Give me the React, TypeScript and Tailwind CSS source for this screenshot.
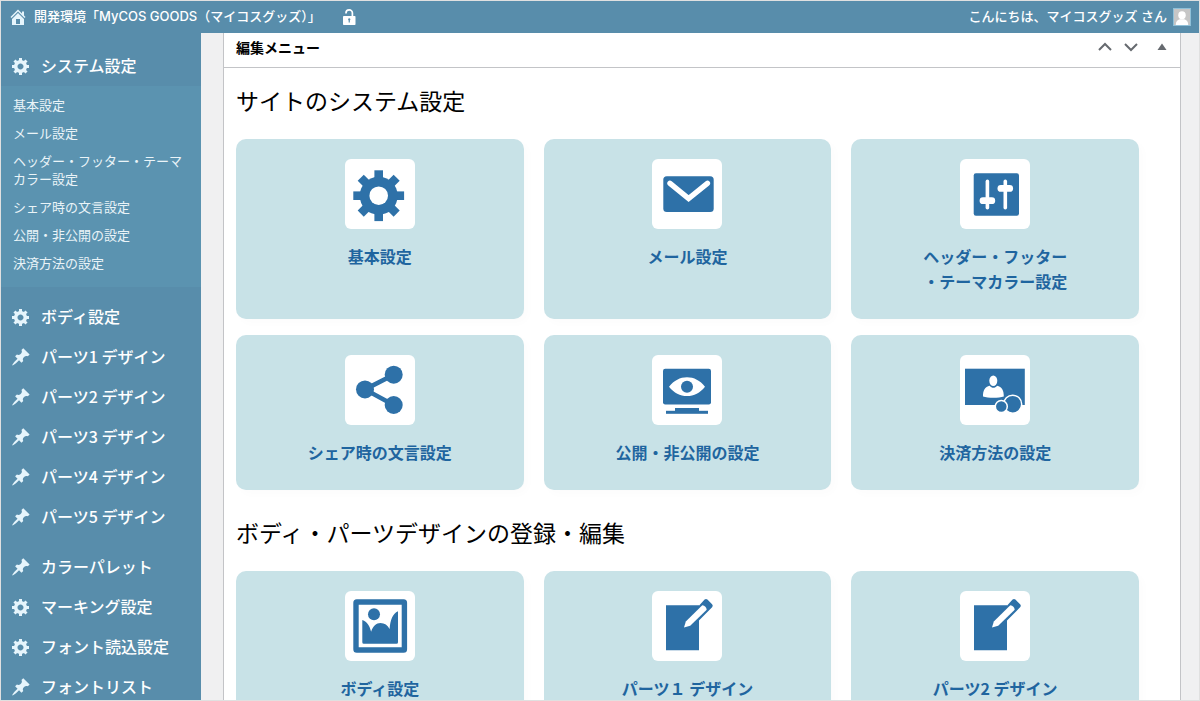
import type { ReactNode } from "react";

type MenuItem = { label: string; icon: "gear" | "pin" };
type CardItem = { label: ReactNode; icon: ReactNode };

const PATHS = {
  gear: "M18 12h-2.18c-.17.7-.44 1.35-.81 1.93l1.54 1.54-2.1 2.1-1.54-1.54c-.58.36-1.23.63-1.91.79V19H8v-2.18c-.68-.16-1.33-.43-1.91-.79l-1.54 1.54-2.12-2.12 1.54-1.54c-.36-.58-.63-1.23-.79-1.91H1V9.03h2.17c.16-.7.44-1.35.8-1.94L2.43 5.55l2.1-2.1 1.54 1.54c.58-.37 1.24-.64 1.93-.81V2h3v2.18c.68.16 1.33.43 1.91.79l1.54-1.54 2.12 2.12-1.54 1.54c.36.59.64 1.24.8 1.94H18V12zm-8.5 1.5c1.66 0 3-1.34 3-3s-1.34-3-3-3-3 1.34-3 3 1.34 3 3 3z",
  pin: "M10.44 3.02l1.82-1.82 6.36 6.35-1.83 1.82c-1.05-.68-2.48-.57-3.41.36l-.75.75c-.92.93-1.04 2.35-.35 3.41l-1.83 1.82-2.41-2.41-2.8 2.79c-.42.42-3.38 2.71-3.8 2.29s1.86-3.39 2.28-3.81l2.79-2.79L4.1 9.36l1.83-1.82c1.05.69 2.48.57 3.4-.36l.75-.75c.93-.92 1.05-2.35.36-3.41z",
  home: "M16 8.5l1.53 1.53-1.06 1.06L10 4.6l-6.47 6.49-1.06-1.06L10 2.5l4 4v-2h2v4zm-6-2.46l6 5.99V18H4v-5.97zM12 17v-5H8v5h4z",
};

const subMenu = [
  "基本設定",
  "メール設定",
  "ヘッダー・フッター・テーマカラー設定",
  "シェア時の文言設定",
  "公開・非公開の設定",
  "決済方法の設定",
];

const designMenu: MenuItem[] = [
  { label: "ボディ設定", icon: "gear" },
  { label: "パーツ1 デザイン", icon: "pin" },
  { label: "パーツ2 デザイン", icon: "pin" },
  { label: "パーツ3 デザイン", icon: "pin" },
  { label: "パーツ4 デザイン", icon: "pin" },
  { label: "パーツ5 デザイン", icon: "pin" },
];

const assetMenu: MenuItem[] = [
  { label: "カラーパレット", icon: "pin" },
  { label: "マーキング設定", icon: "gear" },
  { label: "フォント読込設定", icon: "gear" },
  { label: "フォントリスト", icon: "pin" },
];

const gearIcon = (
  <g>
    {[0, 45, 90, 135].map((deg) => (
      <rect key={deg} x="29.4" y="11.3" width="8.6" height="50.8" transform={`rotate(${deg} 33.7 36.7)`} />
    ))}
    <circle cx="33.7" cy="36.7" r="19" />
    <circle cx="33.7" cy="36.7" r="9.3" fill="#fff" />
  </g>
);

const mailIcon = (
  <g>
    <rect x="11.3" y="17.3" width="50.4" height="35.7" rx="3.5" />
    <path d="M18 24.3 36.6 39.5 55.4 24.3" fill="none" stroke="#fff" strokeWidth="5.4" strokeLinecap="round" />
  </g>
);

const slidersIcon = (
  <g>
    <rect x="13.7" y="14.3" width="45.3" height="42.4" rx="2.2" />
    <g fill="#fff">
      <rect x="25.6" y="20.6" width="3.6" height="30" rx="1.8" />
      <rect x="19.6" y="38.3" width="15.6" height="6.8" rx="3.4" />
      <rect x="43.5" y="20.6" width="3.6" height="30" rx="1.8" />
      <rect x="37.5" y="26" width="15.6" height="6.8" rx="3.4" />
    </g>
  </g>
);

const shareIcon = (
  <g>
    <path d="M48.7 19.7 20 34.4 48.7 50" fill="none" stroke="#2e71a8" strokeWidth="4.6" />
    <circle cx="20" cy="34.4" r="9" />
    <circle cx="48.7" cy="19.7" r="9" />
    <circle cx="48.7" cy="50" r="9" />
  </g>
);

const monitorIcon = (
  <g>
    <rect x="11" y="13.7" width="48" height="35.8" rx="2.2" />
    <rect x="23" y="53" width="24" height="3.5" />
    <rect x="14" y="55.8" width="42" height="3" />
    <path d="M17 31.7C22 25.5 28 22.3 35 22.3s13 3.2 18 9.4c-5 6.2-11 9.4-18 9.4s-13-3.2-18-9.4z" fill="#fff" />
    <circle cx="35" cy="31.7" r="6" />
  </g>
);

const paymentIcon = (
  <g>
    <rect x="5" y="13.7" width="59.8" height="36.3" />
    <ellipse cx="33.3" cy="25.7" rx="4" ry="5.3" fill="#fff" />
    <path d="M23 41.5c0-6.4 1.8-9.5 6.8-10.8 2 2.8 5.2 2.8 7.2 0 5 1.3 6.8 4.4 6.8 10.8-5 1.8-15.8 1.8-20.8 0z" fill="#fff" />
    <circle cx="52.7" cy="49.2" r="9" stroke="#fff" strokeWidth="1.5" />
    <circle cx="41.3" cy="51.5" r="6" stroke="#fff" strokeWidth="1.5" />
  </g>
);

const pictureIcon = (
  <g>
    <rect x="11" y="11" width="48.4" height="48" rx="0.8" fill="none" stroke="#2e71a8" strokeWidth="5.4" strokeLinejoin="round" />
    <circle cx="29" cy="23.2" r="6" />
    <path d="M17.3 29c5 2 7.5 6 8.8 11.7 1.8-5.5 5.2-8.7 9.4-8.7 4 0 7.2 2.2 9.1 6 .6-9 3.2-15.5 8.4-17.7v31a1.5 1.5 0 0 1-1.5 1.5H18.8a1.5 1.5 0 0 1-1.5-1.5z" />
  </g>
);

const editIcon = (
  <g>
    <path d="M14 14.3h33v45H14z" />
    <path d="M52.6 8.6q1.4-1.2 2.8 0l4.7 4.7q1.4 1.4 0 3L44 32.5 34 29z" />
    <path d="M32 36.4 33.8 30.5 50.3 14.2q4 .6 4.4 4.6L38.2 34.7z" fill="#fff" />
  </g>
);

const systemCards: CardItem[] = [
  { label: "基本設定", icon: gearIcon },
  { label: "メール設定", icon: mailIcon },
  {
    label: (
      <>
        ヘッダー・フッター
        <br />
        ・テーマカラー設定
      </>
    ),
    icon: slidersIcon,
  },
  { label: "シェア時の文言設定", icon: shareIcon },
  { label: "公開・非公開の設定", icon: monitorIcon },
  { label: "決済方法の設定", icon: paymentIcon },
];

const designCards: CardItem[] = [
  { label: "ボディ設定", icon: pictureIcon },
  { label: "パーツ１ デザイン", icon: editIcon },
  { label: "パーツ2 デザイン", icon: editIcon },
];

function DashIcon({ name }: { name: keyof typeof PATHS }) {
  return (
    <svg viewBox="0 0 20 20" className="size-5 shrink-0 fill-[#e6f5fc]" aria-hidden="true">
      <path d={PATHS[name]} />
    </svg>
  );
}

function SideLink({ label, icon }: MenuItem) {
  return (
    <li>
      <a href="#" className="flex h-10 items-center gap-2.5 pl-2.5 text-base font-medium text-white">
        <DashIcon name={icon} />
        <span className="pb-0.5">{label}</span>
      </a>
    </li>
  );
}

function CardGrid({ items }: { items: CardItem[] }) {
  return (
    <div className="grid grid-cols-3 gap-x-5 gap-y-4">
      {items.map((item, i) => (
        <a
          key={i}
          href="#"
          className="flex flex-col items-center rounded-[10px] bg-[#c8e2e7] pt-5 pb-[25px] shadow-[4px_4px_10px_rgba(0,0,0,0.015)]"
        >
          <svg viewBox="0 0 70 70" className="size-[70px] rounded-md bg-white fill-[#2e71a8]" aria-hidden="true">
            {item.icon}
          </svg>
          <span className="mt-[15px] text-center text-base leading-[25px] font-semibold text-[#1f659f]">
            {item.label}
          </span>
        </a>
      ))}
    </div>
  );
}

export default function App() {
  return (
    <div className="flex h-screen flex-col overflow-hidden border border-[#e0e0e0] bg-[#f0f0f1] font-['Noto_Sans_CJK_JP',sans-serif]">
      <header className="flex h-8 shrink-0 items-center justify-between bg-[#588dab] pr-2 pl-[7px] font-['Inter','Noto_Sans_CJK_JP',sans-serif] text-[13px] font-medium text-white">
        <div className="flex items-center">
          <a href="#" className="flex items-center gap-1.5">
            <DashIcon name="home" />
            開発環境「MyCOS GOODS（マイコスグッズ）」
          </a>
          <button type="button" aria-label="公開状態" className="ml-5">
            <svg viewBox="0 0 16 18" className="h-[18px] w-4" aria-hidden="true">
              <path d="M5 5.5V5a3.2 3.2 0 0 1 6.4 0v4" fill="none" stroke="#fff" strokeWidth="1.7" />
              <rect x="2" y="8" width="12.5" height="9" rx="0.8" fill="#fff" />
              <path d="M8.25 10.2a1.2 1.2 0 0 1 .6 2.2v2.2h-1.2v-2.2a1.2 1.2 0 0 1 .6-2.2z" fill="#588dab" />
            </svg>
          </button>
        </div>
        <a href="#" className="flex items-center gap-1.5">
          こんにちは、マイコスグッズ さん
          <svg viewBox="0 0 18 18" className="size-[18px] border border-[#8fc0d8] bg-[#c6c6c6] fill-white" aria-hidden="true">
            <ellipse cx="9" cy="7" rx="4.2" ry="4.6" />
            <path d="M2 18c0-4 1.5-5.5 4.5-6.5h5c3 1 4.5 2.5 4.5 6.5z" />
          </svg>
        </a>
      </header>

      <div className="flex min-h-0 flex-1">
        <nav className="w-[200px] shrink-0 overflow-hidden bg-[#588dab] pt-[13px]">
          <ul>
            <SideLink label="システム設定" icon="gear" />
          </ul>
          <ul className="mb-2.5 bg-[#5b93b0] pt-[5px] pb-2.5">
            {subMenu.map((label) => (
              <li key={label}>
                <a href="#" className="block px-3 py-[5px] text-[13px] leading-[18px] text-[#eaf4f8]">
                  {label}
                </a>
              </li>
            ))}
          </ul>
          <ul className="mb-2.5">
            {designMenu.map((item) => (
              <SideLink key={item.label} {...item} />
            ))}
          </ul>
          <ul>
            {assetMenu.map((item) => (
              <SideLink key={item.label} {...item} />
            ))}
          </ul>
        </nav>

        <main className="mr-[18px] ml-[22px] flex-1 overflow-hidden border-x border-[#c3c4c7] bg-white">
          <div className="flex h-[35px] items-center justify-between border-b border-[#c3c4c7] px-3 pb-1.5">
            <h1 className="text-sm font-semibold text-black">編集メニュー</h1>
            <div className="flex items-center gap-3 text-[#666a6f]">
              <button type="button" aria-label="上に移動">
                <svg viewBox="0 0 14 14" className="size-3.5" fill="none" stroke="currentColor" strokeWidth="2" aria-hidden="true">
                  <path d="M1 10 7 4l6 6" />
                </svg>
              </button>
              <button type="button" aria-label="下に移動">
                <svg viewBox="0 0 14 14" className="size-3.5" fill="none" stroke="currentColor" strokeWidth="2" aria-hidden="true">
                  <path d="M1 4 7 10l6-6" />
                </svg>
              </button>
              <button type="button" aria-label="パネルを閉じる" className="ml-1">
                <svg viewBox="0 0 14 14" className="size-3.5" fill="currentColor" aria-hidden="true">
                  <path d="M3.5 10 8 3.5l4.5 6.5z" />
                </svg>
              </button>
            </div>
          </div>

          <div className="pr-[41px] pl-3">
            <section className="pt-4">
              <h2 className="mb-[23px] text-[23px] leading-8 text-black">サイトのシステム設定</h2>
              <CardGrid items={systemCards} />
            </section>
            <section className="pt-[26px]">
              <h2 className="mb-[23px] text-[23px] leading-8 text-black">ボディ・パーツデザインの登録・編集</h2>
              <CardGrid items={designCards} />
            </section>
          </div>
        </main>
      </div>
    </div>
  );
}
